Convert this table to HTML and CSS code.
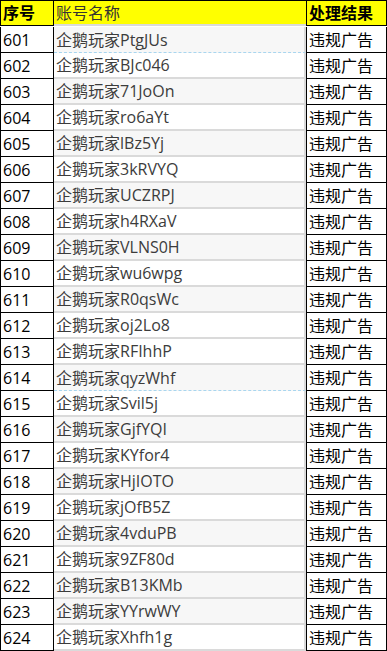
FILE: index.html
```html
<!DOCTYPE html>
<html lang="zh">
<head>
<meta charset="utf-8">
<title>处理结果</title>
<link rel="stylesheet" href="styles.css">
</head>
<body>
<div class="sheet">
  <div class="c c1 head bold">序号</div>
  <div class="c c2 head">账号名称</div>
  <div class="c c3 head bold">处理结果</div>

  <div class="c c1">601</div><div class="c c2 alt dash">企鹅玩家PtgJUs</div><div class="c c3">违规广告</div>
  <div class="c c1">602</div><div class="c c2">企鹅玩家BJc046</div><div class="c c3">违规广告</div>
  <div class="c c1">603</div><div class="c c2 alt">企鹅玩家71JoOn</div><div class="c c3">违规广告</div>
  <div class="c c1">604</div><div class="c c2">企鹅玩家ro6aYt</div><div class="c c3">违规广告</div>
  <div class="c c1">605</div><div class="c c2 alt">企鹅玩家lBz5Yj</div><div class="c c3">违规广告</div>
  <div class="c c1">606</div><div class="c c2">企鹅玩家3kRVYQ</div><div class="c c3">违规广告</div>
  <div class="c c1">607</div><div class="c c2 alt">企鹅玩家UCZRPJ</div><div class="c c3">违规广告</div>
  <div class="c c1">608</div><div class="c c2">企鹅玩家h4RXaV</div><div class="c c3">违规广告</div>
  <div class="c c1">609</div><div class="c c2 alt">企鹅玩家VLNS0H</div><div class="c c3">违规广告</div>
  <div class="c c1">610</div><div class="c c2">企鹅玩家wu6wpg</div><div class="c c3">违规广告</div>
  <div class="c c1">611</div><div class="c c2 alt">企鹅玩家R0qsWc</div><div class="c c3">违规广告</div>
  <div class="c c1">612</div><div class="c c2">企鹅玩家oj2Lo8</div><div class="c c3">违规广告</div>
  <div class="c c1">613</div><div class="c c2">企鹅玩家RFIhhP</div><div class="c c3">违规广告</div>
  <div class="c c1">614</div><div class="c c2 alt dash">企鹅玩家qyzWhf</div><div class="c c3">违规广告</div>
  <div class="c c1">615</div><div class="c c2">企鹅玩家Svil5j</div><div class="c c3">违规广告</div>
  <div class="c c1">616</div><div class="c c2 alt">企鹅玩家GjfYQI</div><div class="c c3">违规广告</div>
  <div class="c c1">617</div><div class="c c2">企鹅玩家KYfor4</div><div class="c c3">违规广告</div>
  <div class="c c1">618</div><div class="c c2 alt">企鹅玩家HjIOTO</div><div class="c c3">违规广告</div>
  <div class="c c1">619</div><div class="c c2">企鹅玩家jOfB5Z</div><div class="c c3">违规广告</div>
  <div class="c c1">620</div><div class="c c2 alt">企鹅玩家4vduPB</div><div class="c c3">违规广告</div>
  <div class="c c1">621</div><div class="c c2">企鹅玩家9ZF80d</div><div class="c c3">违规广告</div>
  <div class="c c1">622</div><div class="c c2 alt">企鹅玩家B13KMb</div><div class="c c3">违规广告</div>
  <div class="c c1">623</div><div class="c c2 alt">企鹅玩家YYrwWY</div><div class="c c3">违规广告</div>
  <div class="c c1">624</div><div class="c c2">企鹅玩家Xhfh1g</div><div class="c c3">违规广告</div>
</div>
</body>
</html>
```

FILE: styles.css
```css
html, body {
  margin: 0;
  padding: 0;
  background: #ffffff;
}

.sheet {
  display: grid;
  grid-template-columns: 54px 252px 81px;
  grid-auto-rows: 26px;
  width: 387px;
  font-family: "Open Sans", "Noto Sans CJK SC", sans-serif;
  font-size: 16px;
  border-top: 1px solid #000;
  box-sizing: border-box;
}

.c {
  box-sizing: border-box;
  display: flex;
  align-items: center;
  white-space: nowrap;
  overflow: hidden;
  line-height: 1;
}

.c1 {
  border-left: 1px solid #000;
  border-right: 1px solid #000;
  border-bottom: 1px solid #000;
  padding-left: 2px;
  color: #000;
}

.c2 {
  border-right: 2px solid #dadada;
  border-bottom: 2px solid #dadada;
  padding-left: 2px;
  color: #3c3c3c;
  background: #ffffff;
}

.c2.alt {
  background: #f7f7f7;
}

.c2.dash {
  border-bottom: 1px dashed #a9d6ef;
}

.c3 {
  border-left: 1px solid #000;
  border-right: 1px solid #000;
  border-bottom: 1px solid #000;
  padding-left: 2px;
  color: #000;
}

.head {
  background: #ffff00;
  margin-top: -1px;
  height: 26px;
}

.c1.head,
.c3.head {
  border-top: 1px solid #000;
}

.c2.head {
  border-right: none;
  border-top: 1px solid #000;
  color: #333;
}

.bold {
  font-weight: 700;
}
```
